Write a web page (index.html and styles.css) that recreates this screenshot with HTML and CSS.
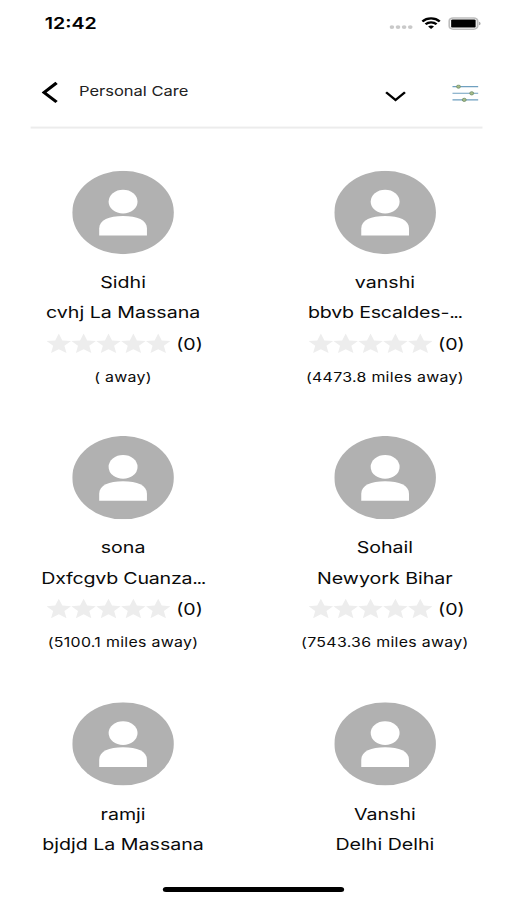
FILE: index.html
```
<!DOCTYPE html>
<html>
<head>
	<meta charset="utf-8">
	<title>Personal Care</title>
	<link rel="stylesheet" href="styles.css">
</head>
<body>

	<svg class="symbols">
		<symbol id="avatar" viewBox="0 0 83 83">
			<circle cx="41.5" cy="41.5" r="41.5" fill="#b1b1b1"/>
			<circle cx="41.5" cy="30.8" r="11.8" fill="#fff"/>
			<path d="M22 64.5V57.5C22 49 30 45 41.5 45S61 49 61 57.5V64.5Z" fill="#fff"/>
		</symbol>
		<symbol id="stars" viewBox="0 0 101.5 20">
			<g fill="#ededed">
				<path id="star" d="M10 0L12.9 6.9L20 7.5L14.6 12.2L16.3 19.5L10 15.6L3.7 19.5L5.4 12.2L0 7.5L7.1 6.9Z"/>
				<use href="#star" x="20.3"/>
				<use href="#star" x="40.6"/>
				<use href="#star" x="60.9"/>
				<use href="#star" x="81.2"/>
			</g>
		</symbol>
	</svg>

	<div class="screen">
		<div class="status">
			<span class="time">12:42</span>
			<svg class="signal" width="20" height="6" viewBox="0 0 20 6" fill="#c9c9c9">
				<circle cx="2" cy="3" r="1.9"/>
				<circle cx="7" cy="3" r="1.9"/>
				<circle cx="12" cy="3" r="1.9"/>
				<circle cx="17" cy="3" r="1.9"/>
			</svg>
			<svg class="wifi" width="16" height="12" viewBox="0 0 16 12" fill="none" stroke="#000" stroke-width="2.1">
				<path d="M0.9 4.4C4.8 0.3 11.2 0.3 15.1 4.4"/>
				<path d="M3.5 7.2C6 4.7 10 4.7 12.5 7.2"/>
				<path d="M8 11.9L5.6 9.4C7 8.2 9 8.2 10.4 9.4Z" fill="#000" stroke="none"/>
			</svg>
			<svg class="battery" width="27" height="13" viewBox="0 0 27 13">
				<rect x="0.8" y="0.8" width="23.2" height="11.2" rx="3.2" fill="#fff" stroke="#bdbdbd" stroke-width="1.5"/>
				<rect x="2.4" y="2.3" width="20" height="8.2" rx="1.2" fill="#000"/>
				<path d="M25.1 4.6C26.9 5.2 26.9 7.6 25.1 8.2Z" fill="#aaa"/>
			</svg>
		</div>

		<div class="header">
			<svg class="back" width="14" height="22" viewBox="0 0 14 22" fill="none" stroke="#000" stroke-width="2.8">
				<path d="M12.2 1.5L2 11L12.2 20.5"/>
			</svg>
			<span class="title">Personal Care</span>
			<svg class="down" width="18" height="12" viewBox="0 0 18 12" fill="none" stroke="#000" stroke-width="2">
				<path d="M1.3 1.8L9 9.6L16.7 1.8"/>
			</svg>
			<svg class="filter" width="22" height="18" viewBox="0 0 22 18">
				<path d="M0.5 2.2H21.5M0.5 8.9H21.5M0.5 15.4H21.5" stroke="#6fa0c0" stroke-width="1.1"/>
				<g fill="#a9bd85" stroke="#71906f" stroke-width="0.8">
					<circle cx="5.4" cy="2.2" r="1.6"/>
					<circle cx="16.2" cy="8.9" r="1.6"/>
					<circle cx="10.1" cy="15.4" r="1.6"/>
				</g>
			</svg>
		</div>

		<div class="list">
			<div class="card">
				<svg class="avatar"><use href="#avatar"/></svg>
				<p class="name">Sidhi</p>
				<p class="place">cvhj La Massana</p>
				<div class="rating"><svg class="stars"><use href="#stars"/></svg><span>(0)</span></div>
				<p class="away">( away)</p>
			</div>
			<div class="card">
				<svg class="avatar"><use href="#avatar"/></svg>
				<p class="name">vanshi</p>
				<p class="place cut">bbvb Escaldes-<span class="dots">...</span></p>
				<div class="rating"><svg class="stars"><use href="#stars"/></svg><span>(0)</span></div>
				<p class="away">(4473.8 miles away)</p>
			</div>
			<div class="card">
				<svg class="avatar"><use href="#avatar"/></svg>
				<p class="name">sona</p>
				<p class="place cut">Dxfcgvb Cuanza<span class="dots">...</span></p>
				<div class="rating"><svg class="stars"><use href="#stars"/></svg><span>(0)</span></div>
				<p class="away">(5100.1 miles away)</p>
			</div>
			<div class="card">
				<svg class="avatar"><use href="#avatar"/></svg>
				<p class="name">Sohail</p>
				<p class="place">Newyork Bihar</p>
				<div class="rating"><svg class="stars"><use href="#stars"/></svg><span>(0)</span></div>
				<p class="away">(7543.36 miles away)</p>
			</div>
			<div class="card">
				<svg class="avatar"><use href="#avatar"/></svg>
				<p class="name">ramji</p>
				<p class="place">bjdjd La Massana</p>
			</div>
			<div class="card">
				<svg class="avatar"><use href="#avatar"/></svg>
				<p class="name">Vanshi</p>
				<p class="place">Delhi Delhi</p>
			</div>
		</div>

		<div class="home"></div>
	</div>

</body>
</html>
```
FILE: styles.css
```
html, body {
	margin: 0;
	height: 900px;
	overflow: hidden;
	background: #fff;
}

.symbols {
	display: none;
}

/* 414x896 phone screen stretched over the window */
.screen {
	width: 414px;
	height: 896px;
	position: relative;
	overflow: hidden;
	transform: scale(1.2246, 1.0045);
	transform-origin: 0 0;
	font-family: Inter, "Liberation Sans", sans-serif;
	color: #0a0a0a;
}

.status {
	display: flex;
	align-items: center;
	height: 46px;
	padding: 0 21px 0 36.5px;
}

.time {
	flex: 1;
	font-size: 16px;
	font-weight: 600;
	color: #000;
}

.signal {
	margin: 8px 6px 0 0;
}

.wifi {
	margin-right: 6px;
}

.header {
	display: flex;
	align-items: center;
	box-sizing: border-box;
	height: 82px;
	margin: 0 20px 0 24.5px;
	padding-top: 11px;
	border-bottom: 2px solid #ececec;
}

.back {
	margin: 1px 0 0 9px;
}

.title {
	flex: 1;
	margin: -2px 0 0 17px;
	font-size: 13.5px;
	letter-spacing: -0.02px;
	color: #222;
}

.down {
	margin: 9px 36.5px 0 0;
}

.filter {
	margin: 3px 3.5px 0 0;
}

.list {
	display: grid;
	grid-template-columns: 171px 171px;
	grid-auto-rows: 264.8px;
	column-gap: 42.8px;
	padding: 41.5px 0 0 15px;
}

.card {
	display: flex;
	flex-direction: column;
	align-items: center;
}

.card p {
	margin: 0;
	white-space: nowrap;
}

.avatar {
	width: 83px;
	height: 83px;
	margin-bottom: 13.2px;
}

.name, .place {
	font-size: 16px;
	line-height: 30px;
}

.cut {
	letter-spacing: -0.18px;
}

.dots {
	letter-spacing: -1.2px;
}

.rating {
	display: flex;
	align-items: center;
	height: 32px;
	padding-left: 2.5px;
	font-size: 16px;
}

.stars {
	width: 101.5px;
	height: 20px;
	margin-right: 4.6px;
}

.card .away {
	margin-top: 2px;
	font-size: 13px;
	letter-spacing: 0.24px;
	line-height: 30px;
}

.home {
	position: absolute;
	left: 133.2px;
	bottom: 8px;
	width: 148px;
	height: 5px;
	border-radius: 3px;
	background: #000;
}
```
